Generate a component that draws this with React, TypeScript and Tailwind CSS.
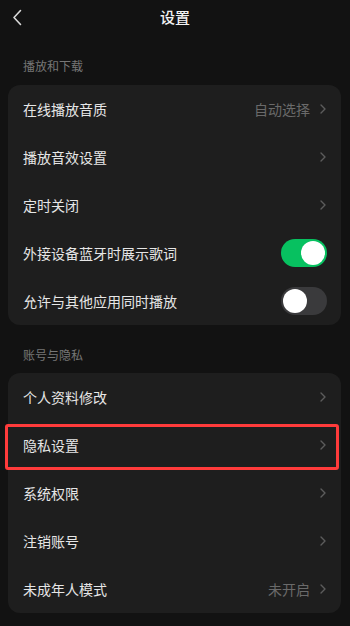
import React from "react";

const font = { fontFamily: '"Noto Sans CJK SC", "Noto Sans", sans-serif' };

function Chevron() {
  return (
    <svg width="8" height="12" viewBox="0 0 8 12" className="shrink-0">
      <path d="M2 2 L6 6 L2 10" fill="none" stroke="#5c5c5c" strokeWidth="1.4" strokeLinecap="round" strokeLinejoin="round" />
    </svg>
  );
}

function Toggle({ on }: { on: boolean }) {
  return (
    <div
      className={`w-[46px] h-[28px] rounded-full flex items-center px-[2px] ${on ? "bg-[#07c160] justify-end" : "bg-[#3a3a3c] justify-start"}`}
    >
      <div className="w-[24px] h-[24px] rounded-full bg-white" />
    </div>
  );
}

type Row = { label: string; value?: string; toggle?: boolean; on?: boolean; highlight?: boolean };

function RowItem({ r }: { r: Row }) {
  return (
    <div className="relative h-[48px] flex items-center pl-[15px] pr-[14px]">
      <span className="flex-1 text-[14px] text-[#e6e6e6]">{r.label}</span>
      {r.toggle ? (
        <Toggle on={!!r.on} />
      ) : (
        <div className="flex items-center gap-[9px]">
          {r.value && <span className="text-[14px] text-[#6a6a6a]">{r.value}</span>}
          <Chevron />
        </div>
      )}
      {r.highlight && (
        <div className="absolute left-[-3px] right-[2px] top-[3px] bottom-[-1px] border-[3px] border-[#ff3b3b] rounded-[3px] pointer-events-none" />
      )}
    </div>
  );
}

function Section({ title, rows, tall }: { title: string; rows: Row[]; tall?: boolean }) {
  return (
    <div>
      <div className={`${tall ? "h-[50px]" : "h-[48px]"} flex items-center pl-[23px] pt-[12px] text-[12px] text-[#767676]`}>{title}</div>
      <div className="mx-[8px] w-[333px] bg-[#1e1e1e] rounded-[12px]">
        {rows.map((r) => (
          <RowItem key={r.label} r={r} />
        ))}
      </div>
    </div>
  );
}

export default function App() {
  return (
    <div className="w-[350px] h-[626px] bg-[#121212] overflow-hidden" style={font}>
      <div className="relative h-[35px] flex items-center justify-center">
        <svg width="12" height="18" viewBox="0 0 12 18" className="absolute left-[11px] top-[9px]">
          <path d="M9.5 1.5 L3 8.5 L9.5 15.5" fill="none" stroke="#d8d8d8" strokeWidth="1.6" strokeLinecap="round" strokeLinejoin="round" />
        </svg>
        <span className="text-[15px] text-[#f2f2f2] font-medium">设置</span>
      </div>
      <Section
        tall
        title="播放和下载"
        rows={[
          { label: "在线播放音质", value: "自动选择" },
          { label: "播放音效设置" },
          { label: "定时关闭" },
          { label: "外接设备蓝牙时展示歌词", toggle: true, on: true },
          { label: "允许与其他应用同时播放", toggle: true, on: false },
        ]}
      />
      <Section
        title="账号与隐私"
        rows={[
          { label: "个人资料修改" },
          { label: "隐私设置", highlight: true },
          { label: "系统权限" },
          { label: "注销账号" },
          { label: "未成年人模式", value: "未开启" },
        ]}
      />
    </div>
  );
}
